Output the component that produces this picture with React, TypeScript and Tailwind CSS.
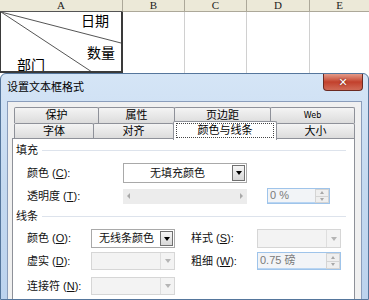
import React from 'react';

const ui = "font-['Liberation_Sans','Noto_Sans_CJK_SC',sans-serif]";

const Acc: React.FC<{ label: string; k: string }> = ({ label, k }) => (
  <span className="whitespace-nowrap">
    {label} (<span className="underline underline-offset-1">{k}</span>):
  </span>
);

const DownArrow: React.FC<{ muted?: boolean }> = ({ muted }) => (
  <span
    className={`block h-0 w-0 border-x-[3px] border-t-[4px] border-x-transparent ${
      muted ? 'border-t-[#b5b5b5]' : 'border-t-black'
    }`}
  />
);

const Combo: React.FC<{ w: string; text?: string; center?: boolean; disabled?: boolean; h: string }> = ({
  w,
  text,
  center,
  disabled,
  h,
}) => (
  <div
    className={`flex ${w} ${h} border ${
      disabled ? 'border-[#d6d6d6] bg-[#f3f3f3]' : 'border-[#a9a9a9] bg-white'
    }`}
  >
    <div className={`flex flex-1 items-center text-[11px] ${center ? 'justify-center' : 'pl-[7px]'}`}>{text}</div>
    {disabled ? (
      <div className="flex w-[14px] items-center justify-center border-l border-[#dedede]">
        <DownArrow muted />
      </div>
    ) : (
      <div className="m-px flex w-[13px] items-center justify-center border border-[#707070] bg-gradient-to-b from-[#f6f6f6] to-[#d8d8d8]">
        <DownArrow />
      </div>
    )}
  </div>
);

const Spin: React.FC<{ w: string; h: string; text: string }> = ({ w, h, text }) => (
  <div className={`flex ${w} ${h} border border-[#9fc4ea] bg-[#f2f4f7]`}>
    <div className="flex flex-1 items-center border-b border-[#b9d5f2] pl-[2px] text-[11px] text-[#7a7a7a]">{text}</div>
    <div className="flex w-[14px] flex-col border border-[#d4d4d4] bg-[#efefef]">
      <div className="flex flex-1 items-center justify-center border-b border-[#d4d4d4]">
        <span className="block h-0 w-0 border-x-[2px] border-b-[3px] border-x-transparent border-b-[#a8a8a8]" />
      </div>
      <div className="flex flex-1 items-center justify-center">
        <span className="block h-0 w-0 border-x-[2px] border-t-[3px] border-x-transparent border-t-[#a8a8a8]" />
      </div>
    </div>
  </div>
);

const Section: React.FC<{ title: string; mt: string }> = ({ title, mt }) => (
  <div className={`flex h-[14px] items-center pl-[3px] pr-[8px] ${mt}`}>
    <span className="text-[11px] leading-none">{title}</span>
    <div className="ml-[4px] h-px flex-1 bg-[#dde3ec]" />
  </div>
);

const Sheet: React.FC = () => (
  <div className="h-[73px]">
    <div className="flex h-[12px] bg-[#ece9d8] font-['Liberation_Serif',serif] text-[11px] leading-none text-[#222]">
      <div className="flex w-[123px] items-center justify-center border-r border-b border-b-[#555] border-r-[#aca899]">A</div>
      <div className="flex w-[62px] items-center justify-center border-r border-b border-[#aca899]">B</div>
      <div className="flex w-[62px] items-center justify-center border-r border-b border-[#aca899]">C</div>
      <div className="flex w-[63px] items-center justify-center border-r border-b border-[#aca899]">D</div>
      <div className="flex flex-1 items-center justify-center border-b border-[#aca899]">E</div>
    </div>
    <div className="flex h-[61px]">
      <div className="relative w-[123px] overflow-hidden border-l border-r-2 border-b-2 border-[#3a3a3a] text-[14px] leading-[16px]">
        <svg className="absolute inset-0" width="120" height="59" viewBox="0 0 120 59">
          <line x1="0" y1="0" x2="120" y2="31" stroke="#555" strokeWidth="1" />
          <line x1="0" y1="0" x2="91" y2="60" stroke="#555" strokeWidth="1" />
        </svg>
        <span className="absolute left-[80px] top-[1px]">日期</span>
        <span className="absolute left-[86px] top-[33px]">数量</span>
        <span className="absolute left-[16px] top-[45px]">部门</span>
      </div>
      <div className="w-[62px] border-r border-[#d0d0d0]" />
      <div className="w-[62px] border-r border-[#d0d0d0]" />
      <div className="w-[63px] border-r border-[#d0d0d0]" />
      <div className="flex-1" />
    </div>
  </div>
);

const Tab: React.FC<{ w: string; label: string; small?: boolean }> = ({ w, label, small }) => (
  <div
    className={`flex ${w} items-center justify-center rounded-t-[2px] border border-b-0 border-[#8e9199] bg-gradient-to-b from-[#f4f4f4] to-[#dcdcdc] -ml-px first:ml-0 ${
      small ? "font-['DejaVu_Sans',sans-serif] text-[8px]" : 'text-[11px]'
    }`}
  >
    {label}
  </div>
);

const Dialog: React.FC = () => (
  <div className="flex h-[227px] flex-col rounded-t-[6px] border border-[#55769c] bg-gradient-to-b from-[#d5e5f6] via-[#c4d9f0] to-[#bcd3ee]">
    <div className="flex h-[27px] items-start justify-between pl-[6px] pr-[5px]">
      <span className="mt-[6px] text-[11px] leading-[14px]">设置文本框格式</span>
      <div className="flex h-[17px] w-[40px] items-center justify-center rounded-b-[4px] border border-t-0 border-[#6b2a22] bg-gradient-to-b from-[#e39a88] via-[#c2402c] to-[#d06a56]">
        <span className="font-['DejaVu_Sans',sans-serif] text-[11px] font-bold leading-none text-white [text-shadow:0_0_2px_#5a1a10]">✕</span>
      </div>
    </div>
    <div className="ml-[6px] mr-[6px] flex flex-1 flex-col border border-b-0 border-[#8a9dbb] bg-[#f0f0f0] pl-[4px] pt-[5px]">
      <div className="ml-[2px] flex h-[16px]">
        <Tab w="w-[85px]" label="保护" />
        <Tab w="w-[77px]" label="属性" />
        <Tab w="w-[97px]" label="页边距" />
        <Tab w="w-[85px]" label="Web" small />
      </div>
      <div className="ml-[2px] flex h-[15px]">
        <Tab w="w-[80px]" label="字体" />
        <Tab w="w-[81px]" label="对齐" />
        <div className="relative z-10 -ml-px -mt-[2px] mb-[-2px] flex w-[104px] items-center justify-center rounded-t-[2px] border border-b-0 border-[#8e9199] bg-white px-[2px] pt-[1px] pb-[2px]">
          <div className="flex h-full w-full items-center justify-center border border-dotted border-[#444] text-[11px]">
            颜色与线条
          </div>
        </div>
        <Tab w="w-[79px]" label="大小" />
      </div>
      <div className="flex w-[343px] flex-1 flex-col border border-b-0 border-[#8e9199] bg-white text-[11px] text-[#111]">
        <Section title="填充" mt="mt-[4px]" />
        <div className="mt-[6px] flex h-[20px] items-center pl-[14px]">
          <div className="w-[96px]">
            <Acc label="颜色" k="C" />
          </div>
          <Combo w="w-[124px]" h="h-[20px]" text="无填充颜色" center />
        </div>
        <div className="mt-[5px] flex h-[16px] items-center pl-[14px]">
          <div className="w-[96px]">
            <Acc label="透明度" k="T" />
          </div>
          <div className="flex h-[15px] w-[124px] items-center justify-between bg-[#ececec] px-[4px]">
            <span className="block h-0 w-0 border-y-[3px] border-r-[3px] border-y-transparent border-r-[#a9a9a9]" />
            <span className="block h-0 w-0 border-y-[3px] border-l-[3px] border-y-transparent border-l-[#a9a9a9]" />
          </div>
          <div className="ml-[20px]">
            <Spin w="w-[63px]" h="h-[16px]" text="0 %" />
          </div>
        </div>
        <Section title="线条" mt="mt-[5px]" />
        <div className="mt-[6px] flex h-[19px] items-center pl-[14px]">
          <div className="w-[64px]">
            <Acc label="颜色" k="O" />
          </div>
          <Combo w="w-[84px]" h="h-[19px]" text="无线条颜色" />
          <div className="ml-[16px] w-[66px]">
            <Acc label="样式" k="S" />
          </div>
          <Combo w="w-[84px]" h="h-[19px]" disabled />
        </div>
        <div className="mt-[4px] flex h-[18px] items-center pl-[14px]">
          <div className="w-[64px]">
            <Acc label="虚实" k="D" />
          </div>
          <Combo w="w-[84px]" h="h-[18px]" disabled />
          <div className="ml-[16px] w-[66px]">
            <Acc label="粗细" k="W" />
          </div>
          <Spin w="w-[84px]" h="h-[18px]" text="0.75 磅" />
        </div>
        <div className="mt-[7px] flex h-[18px] items-center pl-[14px]">
          <div className="w-[64px]">
            <Acc label="连接符" k="N" />
          </div>
          <Combo w="w-[84px]" h="h-[18px]" disabled />
        </div>
      </div>
    </div>
  </div>
);

const App: React.FC = () => (
  <div className={`h-[300px] w-[369px] overflow-hidden bg-white ${ui} text-black`}>
    <Sheet />
    <Dialog />
  </div>
);

export default App;
